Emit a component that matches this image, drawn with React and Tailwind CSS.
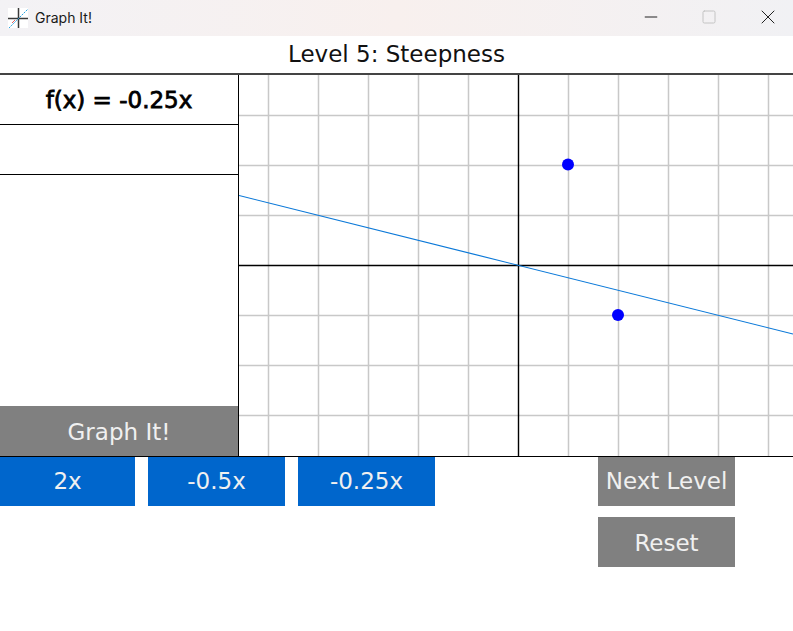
import { Minus, Square, X } from "lucide-react";

const FONT = "font-['DejaVu_Sans',sans-serif]";
const GRID_X = [29, 79, 129, 179, 229, 329, 379, 429, 479, 529];
const GRID_Y = [41, 91, 141, 241, 291, 341];
const CHOICES = ["2x", "-0.5x", "-0.25x"];

function AppIcon() {
  return (
    <svg width="20" height="20" viewBox="0 0 20 20" className="bg-white" aria-hidden="true">
      <path d="M0 10.5H20" stroke="#3a3a3a" strokeWidth="1.5" />
      <path d="M10.5 0V20" stroke="#3a3a3a" strokeWidth="1.5" />
      <path d="M1 20L20 1" stroke="#29a3e0" strokeWidth="1" strokeDasharray="2 1" />
      <path d="M4 15L7 12" stroke="#e06060" strokeWidth="1" />
    </svg>
  );
}

function TitleBar() {
  return (
    <div className="flex h-9 items-center bg-gradient-to-r from-[#f3f2f5] via-[#f8f0ee] to-[#f1f1f4] pl-2">
      <AppIcon />
      <span className="ml-[7px] font-['Inter',sans-serif] text-sm text-[#1a1a1a]">Graph It!</span>
      <div className="ml-auto flex items-center">
        <Minus size={20} strokeWidth={1.2} className="mr-10 mb-[3px] text-[#222]" />
        <Square size={16} strokeWidth={1.5} className="mr-[39px] mb-[2px] text-[#c4c4c4]" />
        <X size={24} strokeWidth={1} className="mr-[13px] mb-[2px] text-[#222]" />
      </div>
    </div>
  );
}

function Graph() {
  return (
    <svg width="554" height="381" viewBox="0 1 554 381" className="block" aria-label="Graph">
      {GRID_X.map((x) => (
        <line key={x} x1={x + 0.5} y1="0" x2={x + 0.5} y2="382" stroke="#c8c8c8" strokeWidth="1.5" />
      ))}
      {GRID_Y.map((y) => (
        <line key={y} x1="0" y1={y + 0.5} x2="554" y2={y + 0.5} stroke="#c8c8c8" strokeWidth="1.5" />
      ))}
      <line x1="279.5" y1="0" x2="279.5" y2="382" stroke="#000" strokeWidth="1.4" />
      <line x1="0" y1="191.5" x2="554" y2="191.5" stroke="#000" strokeWidth="1.4" />
      <line x1="0" y1="121.5" x2="554" y2="260" stroke="#0a78d8" strokeWidth="1.2" />
      <circle cx="329" cy="90.5" r="6" fill="#0000ff" />
      <circle cx="379" cy="241" r="6" fill="#0000ff" />
    </svg>
  );
}

export default function App() {
  return (
    <div className={`h-[631px] w-[793px] overflow-hidden bg-white ${FONT}`}>
      <TitleBar />
      <div className="flex h-[37px] items-center justify-center text-[23px] leading-none text-[#111]">
        Level 5: Steepness
      </div>
      <div className="flex h-[384px] border-t-2 border-b border-t-[#444] border-b-black">
        <div className="flex w-[239px] shrink-0 flex-col border-r border-black">
          <div className="flex h-[50px] shrink-0 items-center justify-center border-b border-black pt-[2px] text-[23px] text-black [-webkit-text-stroke:0.8px_black]">
            f(x) = -0.25x
          </div>
          <div className="h-[50px] shrink-0 border-b border-black" />
          <button className="mt-auto h-[50px] bg-[#808080] pt-[2px] text-[23px] text-[#f0f0f0]">Graph It!</button>
        </div>
        <Graph />
      </div>
      <div className="flex items-start">
        {CHOICES.map((c, i) => (
          <button
            key={c}
            className={`h-[49px] bg-[#0066cc] text-[23px] text-[#f0f0f0] ${i === 0 ? "w-[135px]" : "ml-[13px] w-[137px]"}`}
          >
            {c}
          </button>
        ))}
        <div className="ml-[163px] flex w-[137px] flex-col gap-[11px]">
          <button className="h-[49px] bg-[#808080] text-[23px] whitespace-nowrap text-[#f0f0f0]">Next Level</button>
          <button className="h-[50px] bg-[#808080] pt-[2px] text-[23px] text-[#f0f0f0]">Reset</button>
        </div>
      </div>
    </div>
  );
}
